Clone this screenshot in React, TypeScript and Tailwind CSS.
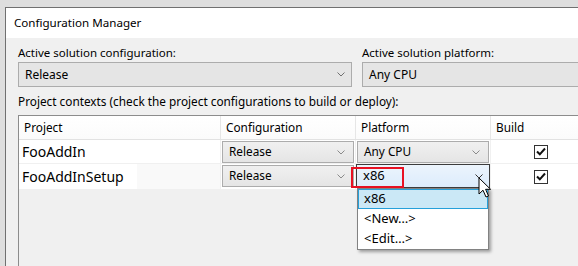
import React from 'react';

const Chevron = ({ className = '' }: { className?: string }) => (
  <svg width="8" height="5" viewBox="0 0 8 5" className={className}>
    <path d="M0.5 0.5 L4 4 L7.5 0.5" fill="none" stroke="currentColor" strokeWidth="1" />
  </svg>
);

const CheckBox = () => (
  <div className="w-[14px] h-[14px] border border-[#333] bg-white flex items-center justify-center">
    <svg width="10" height="9" viewBox="0 0 10 9">
      <path d="M1 4.5 L3.8 7.3 L9 1.5" fill="none" stroke="#111" strokeWidth="2" />
    </svg>
  </div>
);

const Combo = ({ value, className = '' }: { value: string; className?: string }) => (
  <div
    className={`h-[22px] border border-[#acacac] bg-gradient-to-b from-[#f0f0f0] to-[#e5e5e5] flex items-center justify-between pl-[6px] pr-[8px] text-[11.8px] text-black ${className}`}
  >
    <span>{value}</span>
    <Chevron className="text-[#8a8a8a]" />
  </div>
);

const Cursor = () => (
  <svg width="14" height="22" viewBox="0 0 14 22" className="absolute left-[478px] top-[177px]">
    <path
      d="M1 1 L1 17 L5 13.2 L8 20 L10.5 19 L7.6 12.3 L12.6 12.3 Z"
      fill="white"
      stroke="black"
      strokeWidth="1"
      strokeLinejoin="miter"
    />
  </svg>
);

export default function App() {
  return (
    <div className="relative w-[578px] h-[266px] overflow-hidden bg-[#dedede] pl-[5px] pt-[7px] font-['Noto_Sans',sans-serif] text-black">
      <div className="h-full border-l border-t border-[#707070] bg-[#f0f0f0] flex flex-col">
        {/* title bar */}
        <div className="h-[30px] bg-white pl-[8px] flex items-center text-[11.6px] shrink-0">
          Configuration Manager
        </div>

        {/* body */}
        <div className="flex-1 pl-[12px] pt-[7px] flex flex-col">
          <div className="flex gap-[10px]">
            <div className="w-[334px] shrink-0">
              <div className="h-[16px] text-[11.5px] leading-[16px] mb-[1px]">Active solution configuration:</div>
              <div className="h-[25px] border border-[#acacac] bg-[#e5e5e5] flex items-center justify-between pl-[6px] pr-[6px] text-[12px]">
                <span>Release</span>
                <Chevron className="text-[#707070]" />
              </div>
            </div>
            <div className="flex-1">
              <div className="h-[16px] text-[11.5px] leading-[16px] mb-[1px]">Active solution platform:</div>
              <div className="h-[25px] border border-[#acacac] border-r-0 bg-[#e5e5e5] flex items-center pl-[6px] text-[12px]">
                <span>Any CPU</span>
              </div>
            </div>
          </div>

          <div className="h-[16px] text-[11.8px] leading-[16px] mt-[6px]">
            Project contexts (check the project configurations to build or deploy):
          </div>

          {/* table */}
          <div className="mt-[6px] flex-1 border-t border-l border-[#8c8c8c] bg-[#f0f0f0]">
            <div className="grid grid-cols-[202px_135px_135px_1fr] h-[24px] border-b border-[#e2e2e2] bg-gradient-to-b from-white to-[#fbfbfb] text-[11.8px]">
              <div className="border-r border-[#e6e6e6] pl-[5px] flex items-center">Project</div>
              <div className="border-r border-[#e6e6e6] pl-[5px] flex items-center">Configuration</div>
              <div className="border-r border-[#e6e6e6] pl-[5px] flex items-center">Platform</div>
              <div className="pl-[5px] flex items-center">Build</div>
            </div>

            {/* row 1 */}
            <div className="grid grid-cols-[202px_135px_135px_1fr] h-[24px] border-b border-[#f0f0f0]">
              <div className="bg-white border-r border-[#f0f0f0] pl-[3px] flex items-center text-[14px]">FooAddIn</div>
              <div className="bg-white border-r border-[#f0f0f0] pl-[1px] pr-[1px] pt-[1px]">
                <Combo value="Release" />
              </div>
              <div className="bg-white border-r border-[#f0f0f0] pl-[1px] pr-[1px] pt-[1px]">
                <Combo value="Any CPU" />
              </div>
              <div className="bg-white pl-[43px] flex items-center">
                <CheckBox />
              </div>
            </div>

            {/* row 2 */}
            <div className="grid grid-cols-[202px_135px_135px_1fr] h-[25px]">
              <div className="bg-[#f9f9f9] border-r border-[#f0f0f0] flex">
                <div className="bg-white w-[118px] pl-[3px] flex items-center text-[14px]">FooAddInSetup</div>
              </div>
              <div className="bg-white border-r border-[#f0f0f0] pl-[1px] pr-[1px] pt-[1px]">
                <Combo value="Release" />
              </div>
              <div className="bg-white border-r border-[#f0f0f0]">
                <div className="h-[24px] border border-[#3c3c3c] bg-gradient-to-b from-[#ecf4fc] to-[#dcecfc] flex items-center justify-between pl-[6px] pr-[6px] text-[13px]">
                  <span>x86</span>
                  <Chevron className="text-[#333]" />
                </div>
              </div>
              <div className="bg-white pl-[43px] flex items-center">
                <CheckBox />
              </div>
            </div>
          </div>
        </div>
      </div>

      {/* red highlight around selected value */}
      <div className="absolute left-[351px] top-[167px] w-[53px] h-[21px] border-2 border-[#e81123]" />

      {/* open dropdown list */}
      <div className="absolute left-[357px] top-[188px] w-[132px] h-[62px] border border-[#828282] bg-white shadow-[2px_2px_3px_rgba(0,0,0,0.35)] text-[13px] flex flex-col">
        <div className="h-[20px] border border-[#26a0da] bg-[#cbe8f6] flex items-center pl-[5px]">x86</div>
        <div className="h-[20px] flex items-center pl-[6px]">&lt;New…&gt;</div>
        <div className="h-[20px] flex items-center pl-[6px]">&lt;Edit…&gt;</div>
      </div>

      <Cursor />
    </div>
  );
}
